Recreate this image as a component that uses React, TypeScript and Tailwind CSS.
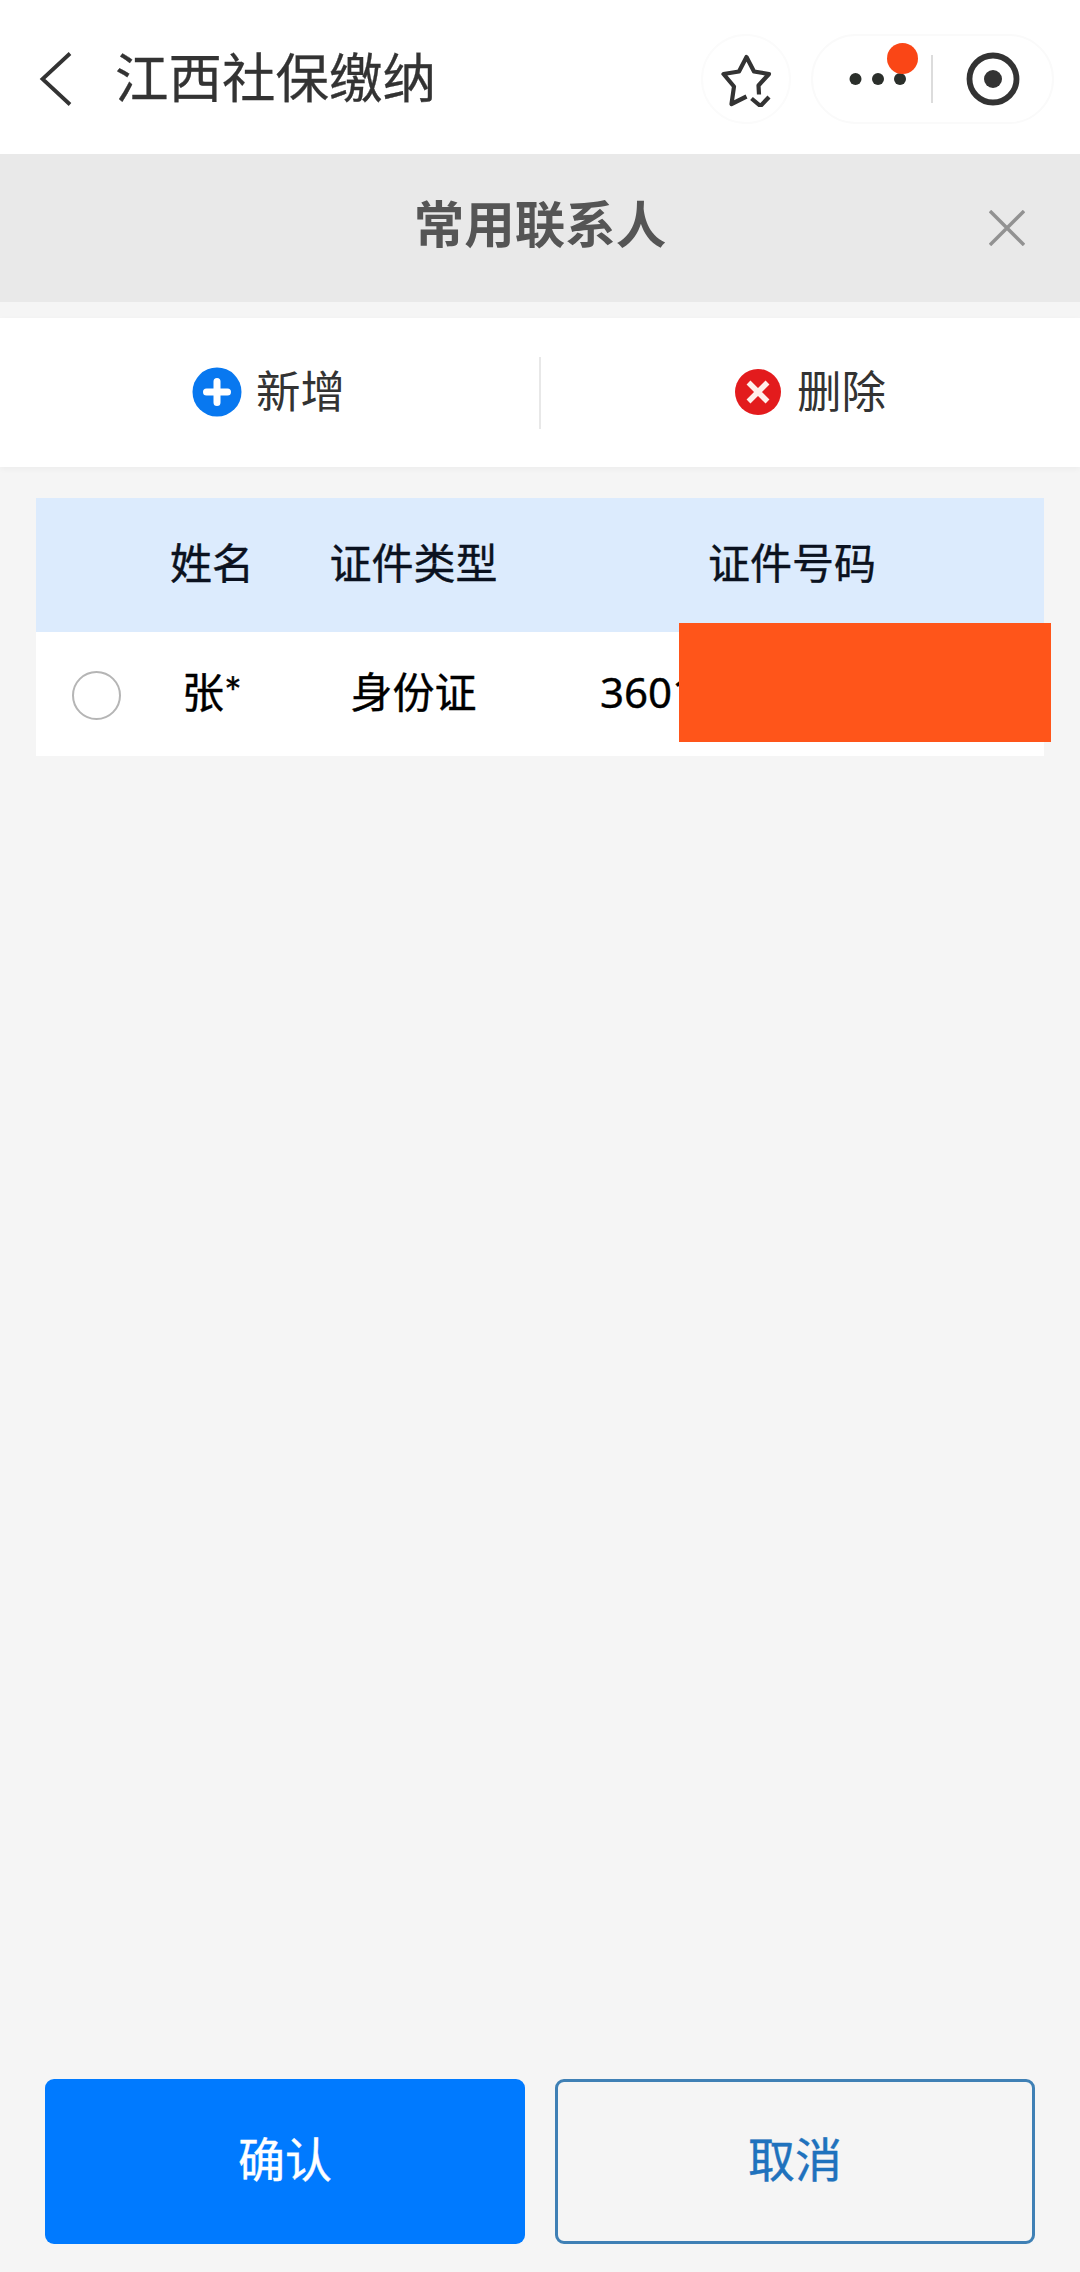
import cn from 'clsx';
import type { ReactNode } from 'react';

type Contact = {
    name: string;
    idType: string;
    idNumber: string;
}

const contacts: Contact[] = [
    { name: '张*', idType: '身份证', idNumber: '3601' },
];

const BackIcon = () => (
    <svg className="h-[56px] w-[36px]" viewBox="0 0 36 56" fill="none" stroke="#333333" strokeWidth="3.8">
        <path d="M33 2.5L5.500 28L33 53.500" />
    </svg>
);

const StarIcon = () => (
    <svg className="h-[56px] w-[52px]" viewBox="0 0 52 56" fill="none" stroke="#333333" strokeWidth="4.2" strokeLinejoin="round">
        <path d="M26.500 45.500L11.500 53L14 35.500L3.500 23L19 20.500L26.500 6L34 20.500L49 23L38.500 34.500L39 43.500" />
        <path d="M31.500 47.500L40.500 55L49 46" strokeLinejoin="miter" />
    </svg>
);

const MoreIcon = () => (
    <svg className="h-[12px] w-[58px]" viewBox="0 0 58 12" fill="#2b2f2b">
        <circle cx="6.500" cy="6" r="6" />
        <circle cx="29" cy="6" r="6" />
        <circle cx="51" cy="6" r="6" />
    </svg>
);

const TargetIcon = () => (
    <svg className="size-[54px]" viewBox="0 0 54 54" fill="none">
        <circle cx="27" cy="27" r="23.500" stroke="#333333" strokeWidth="5.800" />
        <circle cx="27" cy="27" r="9" fill="#333333" />
    </svg>
);

const CloseIcon = () => (
    <svg className="size-[36px]" viewBox="0 0 36 36" stroke="#929292" strokeWidth="3.4">
        <path d="M1 1L35 35M35 1L1 35" />
    </svg>
);

const AddIcon = () => (
    <svg className="size-[50px]" viewBox="0 0 50 50">
        <circle cx="25" cy="25" r="24.500" fill="#0878f0" />
        <path d="M25 14.500V35.500M14.500 25H35.500" stroke="#ffffff" strokeWidth="7" strokeLinecap="round" />
    </svg>
);

const RemoveIcon = () => (
    <svg className="size-[50px]" viewBox="0 0 50 50">
        <circle cx="25" cy="25" r="23" fill="#e31b1d" />
        <path d="M15.500 15.500L34.500 34.500M34.500 15.500L15.500 34.500" stroke="#ffefeb" strokeWidth="5.500" />
    </svg>
);

const Action = ({ icon, children }: { icon: ReactNode; children: ReactNode }) => (
    <button className="flex flex-1 items-center justify-center gap-[14px] pr-[2px] pb-[2px] text-[44.5px] leading-none text-[#333333]">
        {icon}
        <span>{children}</span>
    </button>
);

const rowClass = cn(
    'grid',
    'grid-cols-[120px_112px_291px_466px]',
    'items-center',
    'text-[42px]',
    'leading-none',
    '[-webkit-text-stroke:0.4px]',
);

export default function App() {
    return (
        <div className="flex h-[2272px] w-[1080px] flex-col overflow-hidden bg-[#f5f5f5] font-['Lato','Noto_Sans_CJK_SC',sans-serif]">
            {/* HEADER */}
            <header className="flex h-[154px] shrink-0 items-center bg-white pt-[4px] pr-[26px] pl-[37px]">
                <BackIcon />
                <h1 className="mb-[3px] ml-[42px] flex-1 text-[53.5px] leading-none text-[#333333] [-webkit-text-stroke:0.3px]">江西社保缴纳</h1>
                <div className="flex size-[90px] items-center justify-center rounded-full border-2 border-[#fbfbfb]">
                    <StarIcon />
                </div>
                <div className="ml-[20px] flex h-[90px] w-[243px] items-center rounded-full border-2 border-[#fafafa] pl-[36px]">
                    <div className="relative flex">
                        <MoreIcon />
                        <span className="absolute -top-[30px] left-[38px] size-[31px] rounded-full bg-[#fa4616]" />
                    </div>
                    <div className="ml-[24px] h-[48px] w-[2px] bg-[#dcdcdc]" />
                    <div className="ml-[33px]">
                        <TargetIcon />
                    </div>
                </div>
            </header>

            {/* DIALOG TITLE */}
            <div className="grid h-[148px] shrink-0 grid-cols-[1fr_auto_1fr] items-center bg-[#e9e9e9]">
                <h2 className="col-start-2 mb-[8px] text-[50.5px] leading-none font-bold text-[#555555]">常用联系人</h2>
                <button className="mr-[55px] justify-self-end">
                    <CloseIcon />
                </button>
            </div>

            {/* ACTIONS */}
            <div className="mt-[16px] flex h-[149px] shrink-0 items-center bg-white shadow-[0_2px_6px_rgba(0,0,0,0.04)]">
                <Action icon={<AddIcon />}>新增</Action>
                <div className="h-[72px] w-[2px] bg-[#e8e8e8]" />
                <Action icon={<RemoveIcon />}>删除</Action>
            </div>

            {/* TABLE */}
            <div className="mt-[31px] ml-[36px] w-[1008px] text-center text-black">
                <div className={cn(rowClass, 'h-[134px] bg-[#dcebfd] pb-[5px] text-[#0b1220]')}>
                    <span />
                    <span>姓名</span>
                    <span>证件类型</span>
                    <span>证件号码</span>
                </div>
                {contacts.map((contact) => (
                    <div key={contact.idNumber} className={cn(rowClass, 'relative h-[124px] bg-white pb-[4px]')}>
                        <span className="mt-[7px] size-[49px] justify-self-center rounded-full border-2 border-[#b5b5b5]" />
                        <span>{contact.name}</span>
                        <span>{contact.idType}</span>
                        <span className="pl-[41px] text-left font-['Noto_Sans',sans-serif]">{contact.idNumber}</span>
                        {/* hides the rest of the number */}
                        <span className="absolute -top-[9px] left-[643px] h-[119px] w-[372px] bg-[#ff551a]" />
                    </div>
                ))}
            </div>

            {/* FOOTER */}
            <footer className="mt-auto mb-[28px] grid grid-cols-2 gap-[30px] px-[45px] text-[47px] leading-none">
                <button className="h-[165px] rounded-[9px] bg-[#007aff] pb-[4px] text-white [-webkit-text-stroke:0.4px]">确认</button>
                <button className="h-[165px] rounded-[9px] border-[3px] border-[#3f80b5] pb-[4px] text-[#1f72bd] [-webkit-text-stroke:0.4px]">取消</button>
            </footer>
        </div>
    );
}
